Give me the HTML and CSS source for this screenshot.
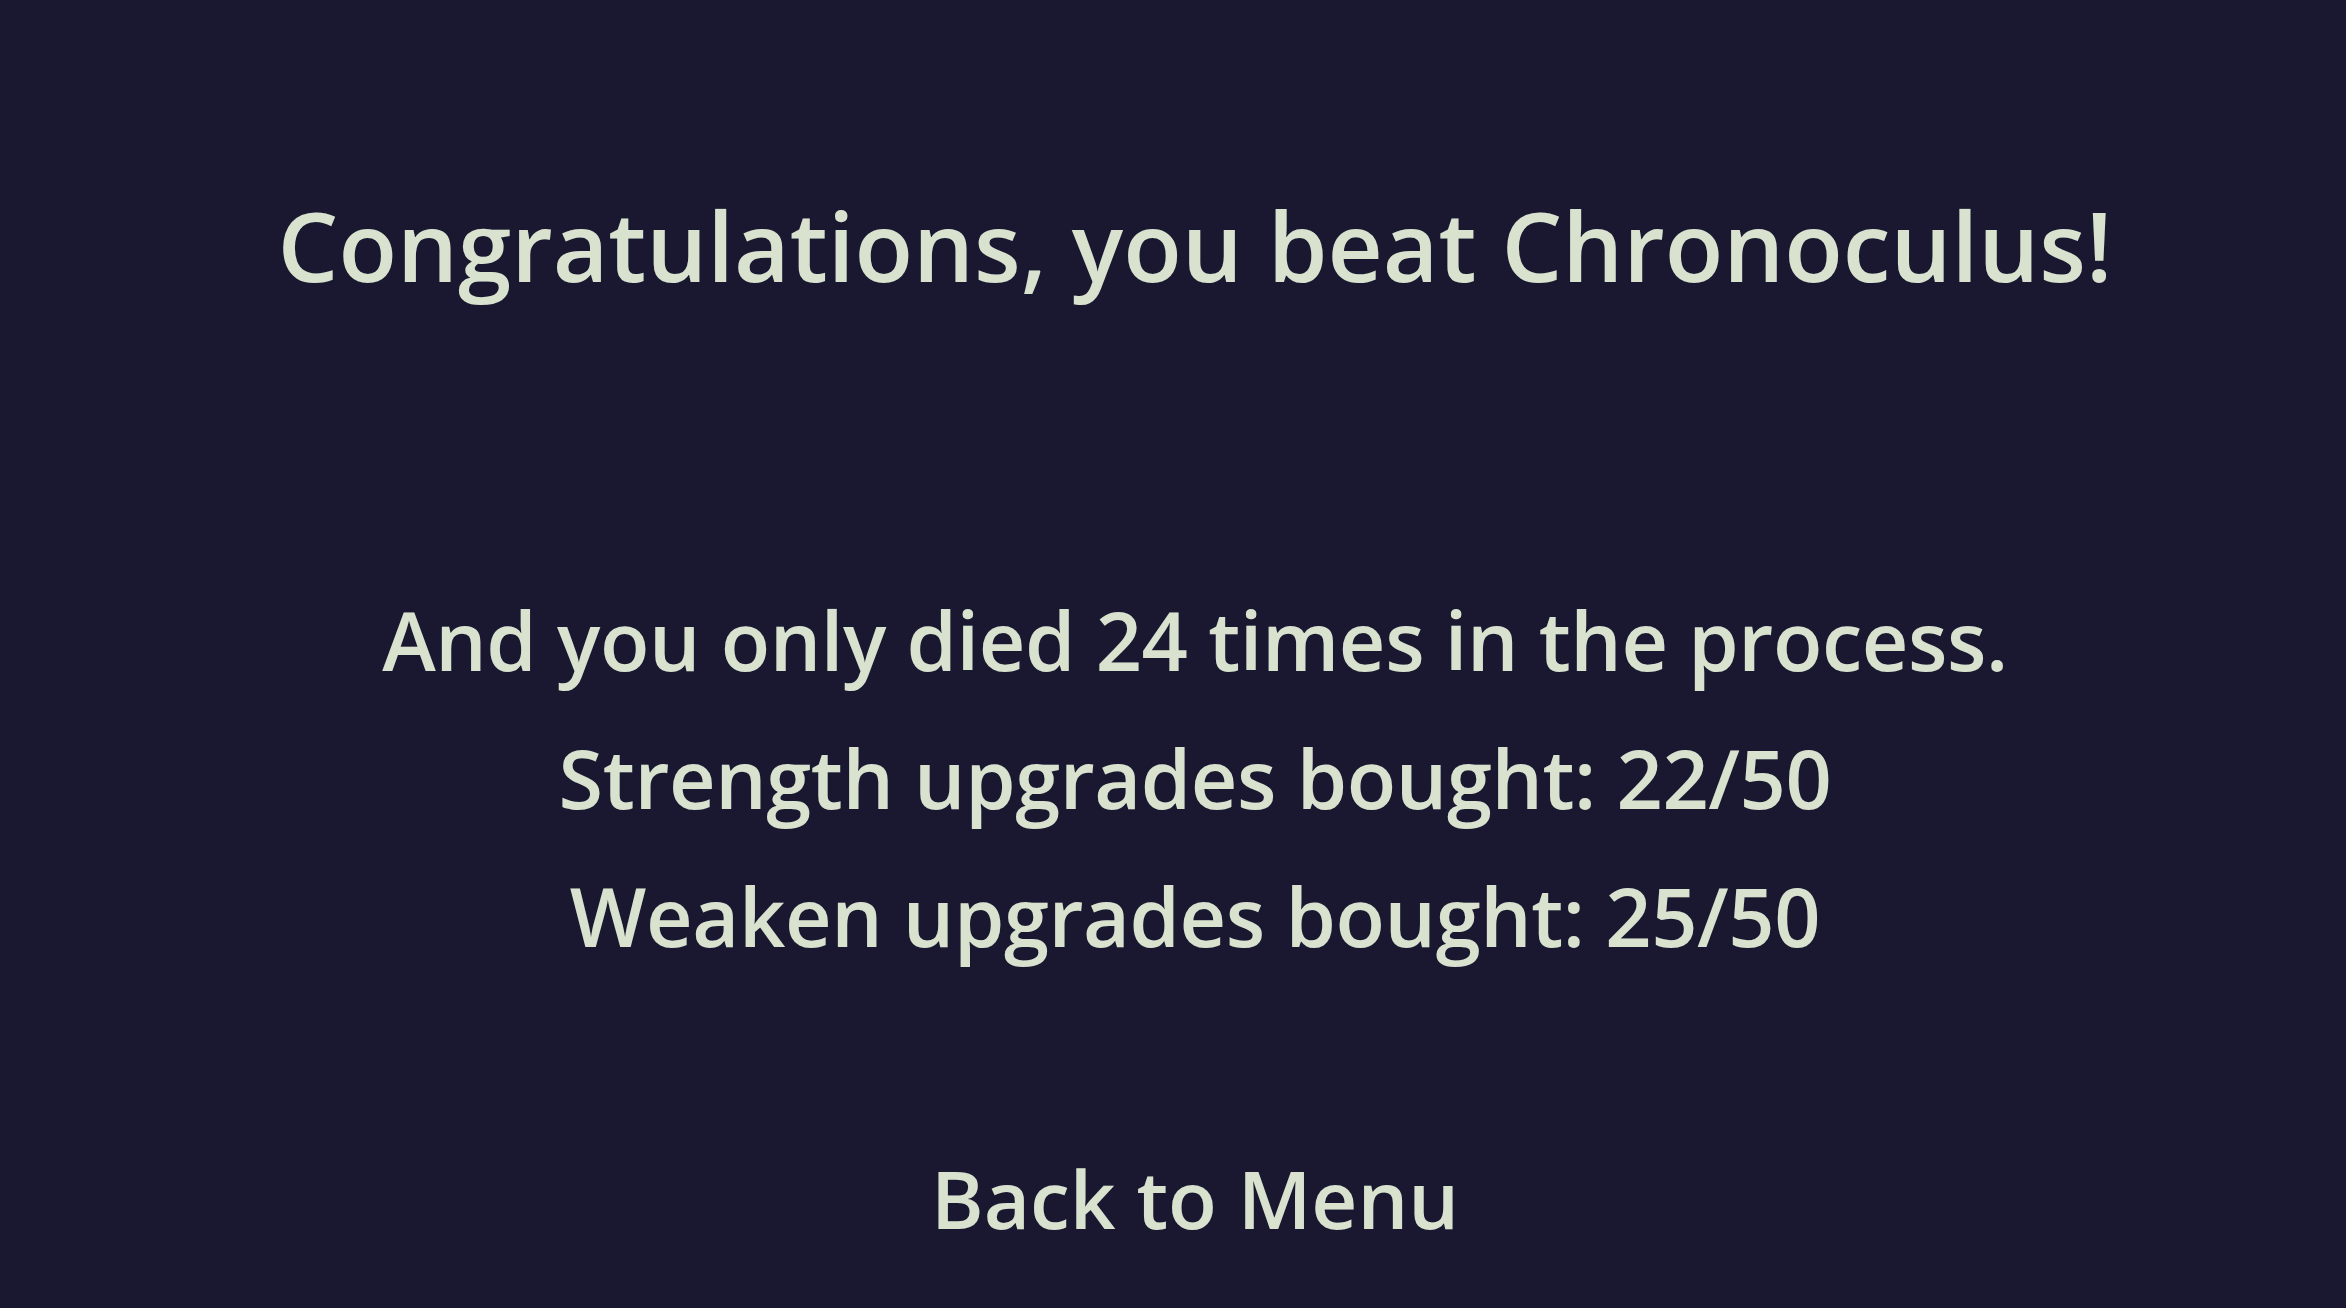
FILE: index.html
```html
<!DOCTYPE html>
<html lang="en">
<head>
<meta charset="utf-8">
<title>Victory</title>
<link rel="stylesheet" href="styles.css">
</head>
<body>
<main class="screen">
  <h1 class="title">Congratulations, you beat Chronoculus!</h1>
  <section class="stats">
    <p class="stat">And you only died 24 times in the process.</p>
    <p class="stat">Strength upgrades bought: 22/50</p>
    <p class="stat">Weaken upgrades bought: 25/50</p>
  </section>
  <button class="menu-btn" type="button">Back to Menu</button>
</main>
</body>
</html>
```

FILE: styles.css
```css
html, body {
  margin: 0;
  padding: 0;
  background: #191830;
  height: 100%;
  overflow: hidden;
}

.screen {
  box-sizing: border-box;
  height: 1308px;
  display: flex;
  flex-direction: column;
  align-items: center;
  padding: 185px 0 0 44px;
  font-family: "Open Sans", "Noto Sans", sans-serif;
  font-weight: 600;
  color: #d8e2cf;
}

.title {
  margin: 0;
  font-size: 96px;
  line-height: 120px;
  font-weight: 600;
  white-space: nowrap;
}

.stats {
  margin-top: 266px;
  display: flex;
  flex-direction: column;
  align-items: center;
}

.stat {
  margin: 0;
  font-size: 81px;
  letter-spacing: -0.4px;
  line-height: 138px;
  white-space: nowrap;
}

.menu-btn {
  margin-top: 163px;
  padding: 0;
  border: none;
  background: transparent;
  font-family: inherit;
  font-weight: 600;
  color: inherit;
  font-size: 80px;
  line-height: 100px;
  white-space: nowrap;
  cursor: pointer;
}
```
